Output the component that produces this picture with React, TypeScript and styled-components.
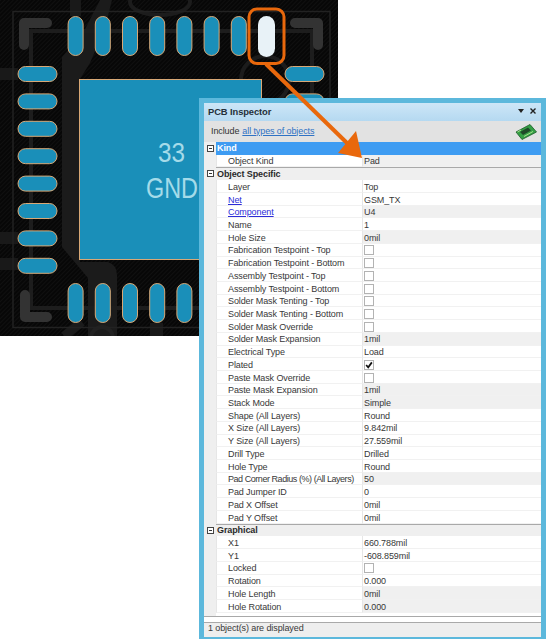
import React from 'react';
import styled, { createGlobalStyle } from 'styled-components';

const GlobalStyle = createGlobalStyle`
  html, body {
    margin: 0;
    padding: 0;
    background: #fff;
  }
`;

const Page = styled.div`
  position: relative;
  width: 546px;
  height: 639px;
  overflow: hidden;
  background: #fff;
  font-family: "Liberation Sans", Arial, sans-serif;
`;

const Board = styled.svg`
  display: block;
  width: 338px;
  height: 336px;
`;

const Overlay = styled.svg`
  position: absolute;
  left: 0;
  top: 0;
  width: 546px;
  height: 639px;
  pointer-events: none;
`;

const Panel = styled.div`
  position: absolute;
  left: 199px;
  top: 98px;
  width: 347px;
  height: 541px;
  box-sizing: border-box;
  padding: 5px 5px 2px;
  background: #5cb8dc;
  display: flex;
  flex-direction: column;
  font-size: 9px;
  letter-spacing: -0.1px;
  color: #383838;
`;

const TitleBar = styled.div`
  height: 18px;
  flex: none;
  box-sizing: border-box;
  display: flex;
  align-items: center;
  justify-content: space-between;
  padding: 0 5px 2px 4px;
  background: linear-gradient(#cde6f7, #b5d9f1);
`;

const Title = styled.div`
  font-weight: 700;
  font-size: 9.4px;
  color: #25303a;
`;

const TitleIcons = styled.div`
  display: flex;
  align-items: center;
  gap: 6px;
`;

const IncludeBar = styled.div`
  height: 21px;
  flex: none;
  box-sizing: border-box;
  display: flex;
  align-items: center;
  justify-content: space-between;
  padding: 0 4px 0 7px;
  background: #e2e2e2;
`;

const IncludeText = styled.div`
  padding-bottom: 2px;
  color: #333;
`;

const IncludeLink = styled.a`
  color: #2f72c4;
  text-decoration: underline;
  margin-left: 3px;
`;

const Grid = styled.div`
  flex: 1;
  background: linear-gradient(90deg, #efefef 12px, #fff 12px);
  display: flex;
  flex-direction: column;
`;

const GroupHeader = styled.div<{ $active?: boolean }>`
  height: 12.75px;
  flex: none;
  display: flex;
  align-items: center;
  background: ${p => (p.$active ? '#3e9cf2' : '#efefef')};
  box-shadow: ${p => (p.$active ? 'none' : 'inset 0 1px 0 #a9a9a9')};
`;

const GroupGutter = styled.div`
  width: 12px;
  height: 100%;
  flex: none;
  display: flex;
  align-items: center;
  justify-content: center;
  background: #efefef;
`;

const Toggle = styled.div`
  width: 7px;
  height: 7px;
  box-sizing: border-box;
  border: 1px solid #444;
  background: #fff;
  display: flex;
  align-items: center;
  justify-content: center;

  &::after {
    content: '';
    width: 3px;
    height: 1px;
    background: #333;
  }
`;

const GroupName = styled.div<{ $active?: boolean }>`
  font-weight: 700;
  padding-left: 1px;
  color: ${p => (p.$active ? '#fff' : '#2a2a2a')};
`;

const Row = styled.div`
  height: 12.73px;
  flex: none;
  display: grid;
  grid-template-columns: 12px 146px 1fr;
`;

const Gutter = styled.div`
  background: #efefef;
`;

const Label = styled.div<{ $tight?: boolean }>`
  box-sizing: border-box;
  min-width: 0;
  padding: 1.5px 0 0 11px;
  display: flex;
  align-items: center;
  white-space: nowrap;
  letter-spacing: ${p => (p.$tight ? '-0.45px' : 'inherit')};
  border-bottom: 1px solid #f1f1f1;
  border-left: 1px solid #e6e6e6;
`;

const LabelLink = styled.a`
  color: #2c2cd8;
  text-decoration: underline;
`;

const Value = styled.div<{ $readOnly?: boolean }>`
  box-sizing: border-box;
  padding: 1.5px 0 0 1px;
  display: flex;
  align-items: center;
  white-space: nowrap;
  background: ${p => (p.$readOnly ? '#f0f0f0' : '#fff')};
  border-bottom: 1px solid #f1f1f1;
  border-left: 1px solid #e6e6e6;
`;

const Check = styled.div`
  width: 10px;
  height: 10px;
  box-sizing: border-box;
  border: 1px solid #b3b3b3;
  background: #fff;
  display: flex;
  align-items: center;
  justify-content: center;
`;

const GridEnd = styled.div`
  height: 5px;
  flex: none;
  margin-top: auto;
  background: #fff;
  border-top: 1px solid #a9a9a9;
`;

const StatusBar = styled.div`
  height: 15px;
  flex: none;
  box-sizing: border-box;
  display: flex;
  align-items: center;
  padding: 0 0 5px 4px;
  background: #eeeeee;
  border-top: 1px solid #a9a9a9;
`;

type Prop = {
  label: string;
  value?: string;
  link?: boolean;
  readOnly?: boolean;
  tight?: boolean;
  check?: 'on' | 'off';
};

const specific: Prop[] = [
  { label: 'Layer', value: 'Top' },
  { label: 'Net', value: 'GSM_TX', link: true },
  { label: 'Component', value: 'U4', link: true, readOnly: true },
  { label: 'Name', value: '1' },
  { label: 'Hole Size', value: '0mil', readOnly: true },
  { label: 'Fabrication Testpoint - Top', check: 'off' },
  { label: 'Fabrication Testpoint - Bottom', check: 'off' },
  { label: 'Assembly Testpoint - Top', check: 'off' },
  { label: 'Assembly Testpoint - Bottom', check: 'off' },
  { label: 'Solder Mask Tenting - Top', check: 'off' },
  { label: 'Solder Mask Tenting - Bottom', check: 'off' },
  { label: 'Solder Mask Override', check: 'off' },
  { label: 'Solder Mask Expansion', value: '1mil', readOnly: true },
  { label: 'Electrical Type', value: 'Load' },
  { label: 'Plated', check: 'on' },
  { label: 'Paste Mask Override', check: 'off' },
  { label: 'Paste Mask Expansion', value: '1mil', readOnly: true },
  { label: 'Stack Mode', value: 'Simple', readOnly: true },
  { label: 'Shape (All Layers)', value: 'Round' },
  { label: 'X Size (All Layers)', value: '9.842mil' },
  { label: 'Y Size (All Layers)', value: '27.559mil' },
  { label: 'Drill Type', value: 'Drilled' },
  { label: 'Hole Type', value: 'Round' },
  { label: 'Pad Corner Radius (%) (All Layers)', value: '50', readOnly: true, tight: true },
  { label: 'Pad Jumper ID', value: '0' },
  { label: 'Pad X Offset', value: '0mil' },
  { label: 'Pad Y Offset', value: '0mil' },
];

const graphical: Prop[] = [
  { label: 'X1', value: '660.788mil' },
  { label: 'Y1', value: '-608.859mil' },
  { label: 'Locked', check: 'off' },
  { label: 'Rotation', value: '0.000' },
  { label: 'Hole Length', value: '0mil', readOnly: true },
  { label: 'Hole Rotation', value: '0.000', readOnly: true },
];

const PropRow = ({ label, value, link, readOnly, tight, check }: Prop) => (
  <Row>
    <Gutter />
    <Label $tight={tight}>{link ? <LabelLink>{label}</LabelLink> : label}</Label>
    <Value $readOnly={readOnly}>
      {check ? (
        <Check>
          {check === 'on' && (
            <svg width="8" height="8" viewBox="0 0 7 7">
              <path d="M1 3.5 L2.8 5.5 L6 1.2" fill="none" stroke="#111" strokeWidth="1.5" />
            </svg>
          )}
        </Check>
      ) : (
        value
      )}
    </Value>
  </Row>
);

const Group = ({ name, active, children }: { name: string; active?: boolean; children: React.ReactNode }) => (
  <>
    <GroupHeader $active={active}>
      <GroupGutter>
        <Toggle />
      </GroupGutter>
      <GroupName $active={active}>{name}</GroupName>
    </GroupHeader>
    {children}
  </>
);

const padCenters = [75.6, 102.8, 130, 157.2, 184.4, 211.6, 238.8];
const sideCenters = [74, 101.4, 128.8, 156.2, 183.6, 211, 238.4, 265.8];

const Pad = ({ x, y, w, h, white }: { x: number; y: number; w: number; h: number; white?: boolean }) => (
  <rect
    x={x}
    y={y}
    width={w}
    height={h}
    rx={Math.min(w, h) / 2}
    fill={white ? '#e8f2f7' : '#1a8fb9'}
    stroke={white ? 'none' : '#d8a876'}
    strokeWidth="1"
  />
);

const silk = { fill: 'none', stroke: '#333', strokeWidth: 10, strokeLinecap: 'round', strokeLinejoin: 'round' } as const;

const PcbBoard = () => (
  <Board viewBox="0 0 338 336">
    <defs>
      <pattern id="hatch" width="3" height="3" patternUnits="userSpaceOnUse" patternTransform="rotate(-45)">
        <rect width="3" height="3" fill="#070707" />
        <rect width="3" height="1" fill="#101010" />
      </pattern>
    </defs>
    <rect width="338" height="336" fill="url(#hatch)" />
    {/* copper pours */}
    <path
      d="M62 57 L83 33 L100 0 L112 0 L105 28 L90 63 L80 79 L80 262 L108 262 Q117 265 117 275 L117 336 L88 336 L88 278 L62 247 Z"
      fill="#1b1b1b"
    />
    <rect x="0" y="68" width="18" height="12" fill="#191919" />
    <rect x="0" y="232" width="18" height="12" fill="#191919" />
    <rect x="0" y="258" width="18" height="12" fill="#191919" />
    <rect x="70" y="0" width="11" height="16" fill="#191919" />
    <rect x="150" y="323" width="13" height="13" fill="#191919" />
    <path d="M64 336 L82 322" stroke="#1b1b1b" strokeWidth="9" />
    <circle cx="265" cy="80" r="24" fill="none" stroke="#1c1c1c" strokeWidth="4" />
    <ellipse cx="160" cy="2" rx="30" ry="13" fill="none" stroke="#1c1c1c" strokeWidth="4" />
    <circle cx="102" cy="338" r="11" fill="none" stroke="#222" strokeWidth="4" />
    {/* outline and silkscreen */}
    <rect x="13" y="11.5" width="317" height="316" fill="none" stroke="#222" strokeWidth="1.5" />
    <rect x="31" y="31" width="281" height="277" fill="none" stroke="#1d1d1d" strokeWidth="4" />
    <path d="M47 23 L24 23 L24 45" {...silk} />
    <path d="M295 23 L318 23 L318 45" {...silk} />
    <path d="M25 295 L25 317 L47 317" {...silk} />
    {padCenters.map(x => (
      <Pad key={x} x={x - 7.5} y={16.5} w={15} h={39} />
    ))}
    <Pad x={258} y={16} w={17} h={41} white />
    {sideCenters.map(y => (
      <Pad key={y} x={18} y={y - 7.5} w={39} h={15} />
    ))}
    {sideCenters.slice(0, 2).map(y => (
      <Pad key={y} x={285} y={y - 7.5} w={39} h={15} />
    ))}
    {padCenters.slice(0, 5).map(x => (
      <Pad key={x} x={x - 7.5} y={283.5} w={15} h={39} />
    ))}
    <rect x="79.5" y="79.5" width="182" height="180" fill="#1a8fb9" stroke="#d8a876" strokeWidth="1" />
    <text x="158" y="162" fontSize="28" textLength="27" lengthAdjust="spacingAndGlyphs" fontFamily="Liberation Sans" fill="#a5dbe9">33</text>
    <text x="146" y="198" fontSize="29" textLength="52" lengthAdjust="spacingAndGlyphs" fontFamily="Liberation Sans" fill="#a5dbe9">GND</text>
  </Board>
);

const BoardIcon = () => (
  <svg width="22" height="16" viewBox="0 0 22 16">
    <path d="M1 8 L15 0.5 L21.5 8 L7 15.5 Z" fill="#35a045" stroke="#1a5c26" strokeWidth="0.8" />
    <path d="M5 8 L13 3.5 L16 6.5 L8 11 Z" fill="#1f4a28" />
    <path d="M9 12.5 L18 7.5 M2.5 8 L6 6" stroke="#a8e08c" strokeWidth="1" />
  </svg>
);

export default function App() {
  return (
    <Page>
      <GlobalStyle />
      <PcbBoard />
      <Panel>
        <TitleBar>
          <Title>PCB Inspector</Title>
          <TitleIcons>
            <svg width="6" height="4" viewBox="0 0 6 4">
              <path d="M0 0 H6 L3 4 Z" fill="#222" />
            </svg>
            <svg width="6" height="6" viewBox="0 0 6 6">
              <path d="M0.5 0.5 L5.5 5.5 M5.5 0.5 L0.5 5.5" stroke="#222" strokeWidth="1.4" />
            </svg>
          </TitleIcons>
        </TitleBar>
        <IncludeBar>
          <IncludeText>
            Include<IncludeLink>all types of objects</IncludeLink>
          </IncludeText>
          <BoardIcon />
        </IncludeBar>
        <Grid>
          <Group name="Kind" active>
            <PropRow label="Object Kind" value="Pad" readOnly />
          </Group>
          <Group name="Object Specific">
            {specific.map(p => (
              <PropRow key={p.label} {...p} />
            ))}
          </Group>
          <Group name="Graphical">
            {graphical.map(p => (
              <PropRow key={p.label} {...p} />
            ))}
          </Group>
          <GridEnd />
        </Grid>
        <StatusBar>1 object(s) are displayed</StatusBar>
      </Panel>
      <Overlay viewBox="0 0 546 639">
        <rect x="249" y="9" width="35" height="54.5" rx="8" fill="none" stroke="#e9680c" strokeWidth="3" />
        <path d="M266 64 L347 143" stroke="#e9680c" strokeWidth="4" fill="none" />
        <path d="M362 158 L338 153 L356 131 Z" fill="#e9680c" />
      </Overlay>
    </Page>
  );
}
